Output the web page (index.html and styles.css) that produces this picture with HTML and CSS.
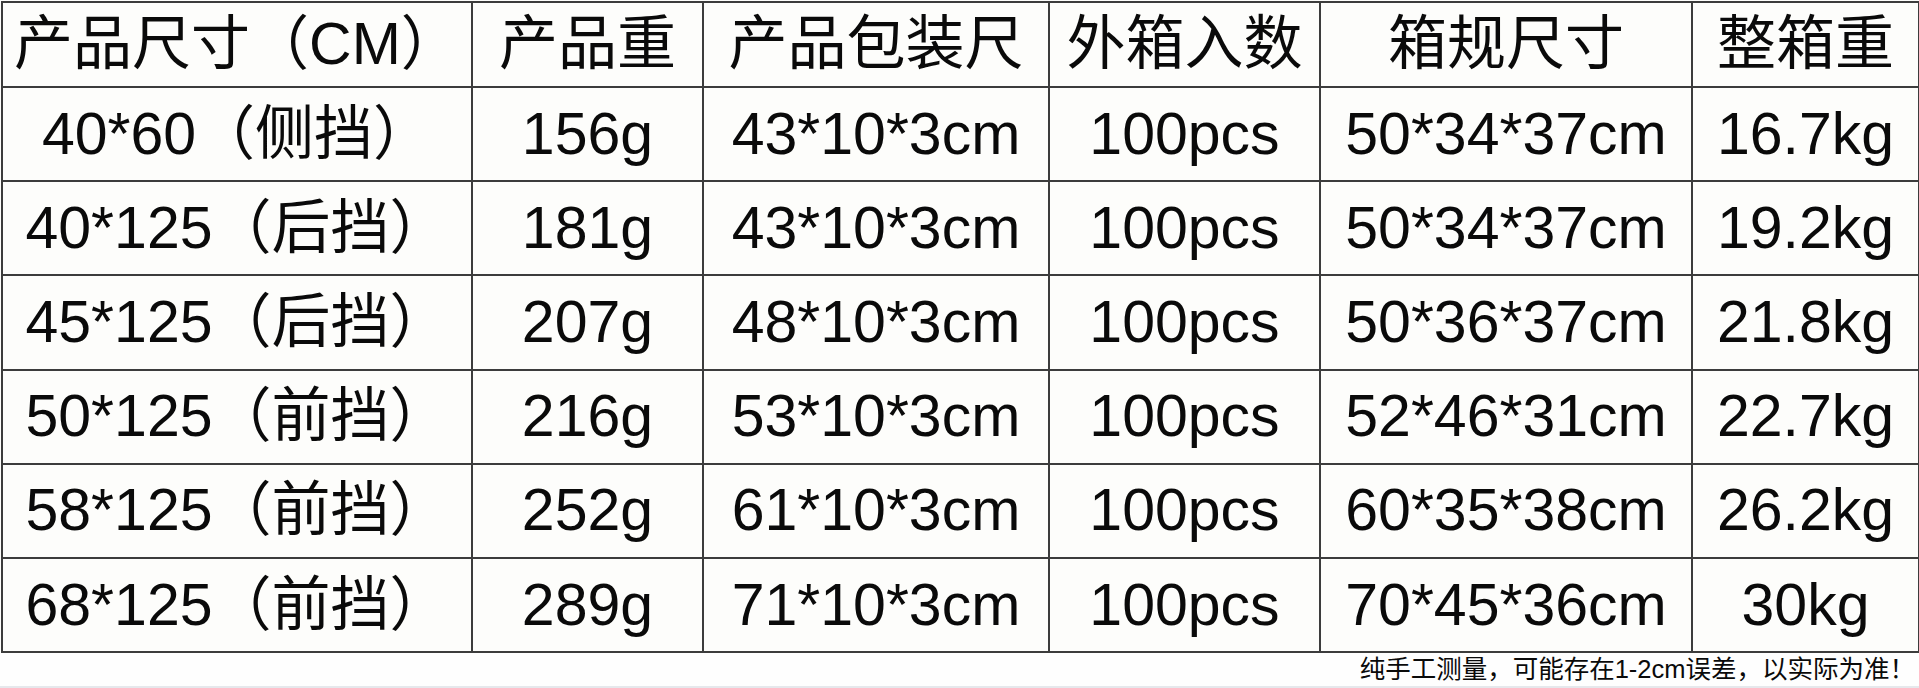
FILE: index.html
```html
<!DOCTYPE html>
<html lang="zh-CN">
<head>
<meta charset="utf-8">
<title>产品尺寸表</title>
<link rel="stylesheet" href="styles.css">
</head>
<body>
<div class="sheet">
  <table class="spec">
    <colgroup>
      <col class="c1"><col class="c2"><col class="c3"><col class="c4"><col class="c5"><col class="c6">
    </colgroup>
    <thead>
      <tr class="head">
        <th>产品尺寸（CM）</th>
        <th>产品重</th>
        <th>产品包装尺</th>
        <th>外箱入数</th>
        <th>箱规尺寸</th>
        <th>整箱重</th>
      </tr>
    </thead>
    <tbody>
      <tr><td>40*60（侧挡）</td><td>156g</td><td>43*10*3cm</td><td>100pcs</td><td>50*34*37cm</td><td>16.7kg</td></tr>
      <tr><td>40*125（后挡）</td><td>181g</td><td>43*10*3cm</td><td>100pcs</td><td>50*34*37cm</td><td>19.2kg</td></tr>
      <tr><td>45*125（后挡）</td><td>207g</td><td>48*10*3cm</td><td>100pcs</td><td>50*36*37cm</td><td>21.8kg</td></tr>
      <tr><td>50*125（前挡）</td><td>216g</td><td>53*10*3cm</td><td>100pcs</td><td>52*46*31cm</td><td>22.7kg</td></tr>
      <tr><td>58*125（前挡）</td><td>252g</td><td>61*10*3cm</td><td>100pcs</td><td>60*35*38cm</td><td>26.2kg</td></tr>
      <tr><td>68*125（前挡）</td><td>289g</td><td>71*10*3cm</td><td>100pcs</td><td>70*45*36cm</td><td>30kg</td></tr>
    </tbody>
  </table>
  <p class="note">纯手工测量，可能存在1-2cm误差，以实际为准！</p>
</div>
</body>
</html>
```

FILE: styles.css
```css
html, body {
  margin: 0;
  padding: 0;
  background: #fdfdfb;
}

body {
  font-family: "Liberation Sans", "Noto Sans CJK SC", sans-serif;
  color: #0a0a0a;
}

.sheet {
  width: 1919px;
  height: 688px;
  overflow: hidden;
  display: flex;
  flex-direction: column;
  border-bottom: 2px solid #e6e8ec;
  box-sizing: border-box;
}

.spec {
  width: 1918px;
  margin: 1px 0 0 1px;
  border-collapse: collapse;
  table-layout: fixed;
}

.c1 { width: 470px; }
.c2 { width: 231px; }
.c3 { width: 346px; }
.c4 { width: 271px; }
.c5 { width: 372px; }
.c6 { width: 227px; }

.spec th,
.spec td {
  border: 2px solid #3c3c3c;
  text-align: center;
  vertical-align: middle;
  padding: 0;
  font-size: 59px;
  font-weight: 400;
  line-height: 1;
  white-space: nowrap;
  background: #fdfdfb;
}

.head th {
  height: 83px;
}

.spec td {
  height: 92.2px;
}

.note {
  margin: 0;
  flex: 1;
  display: flex;
  align-items: center;
  justify-content: flex-end;
  padding-right: 4px;
  font-size: 25.5px;
  line-height: 1;
  background: #fefefe;
}
```
